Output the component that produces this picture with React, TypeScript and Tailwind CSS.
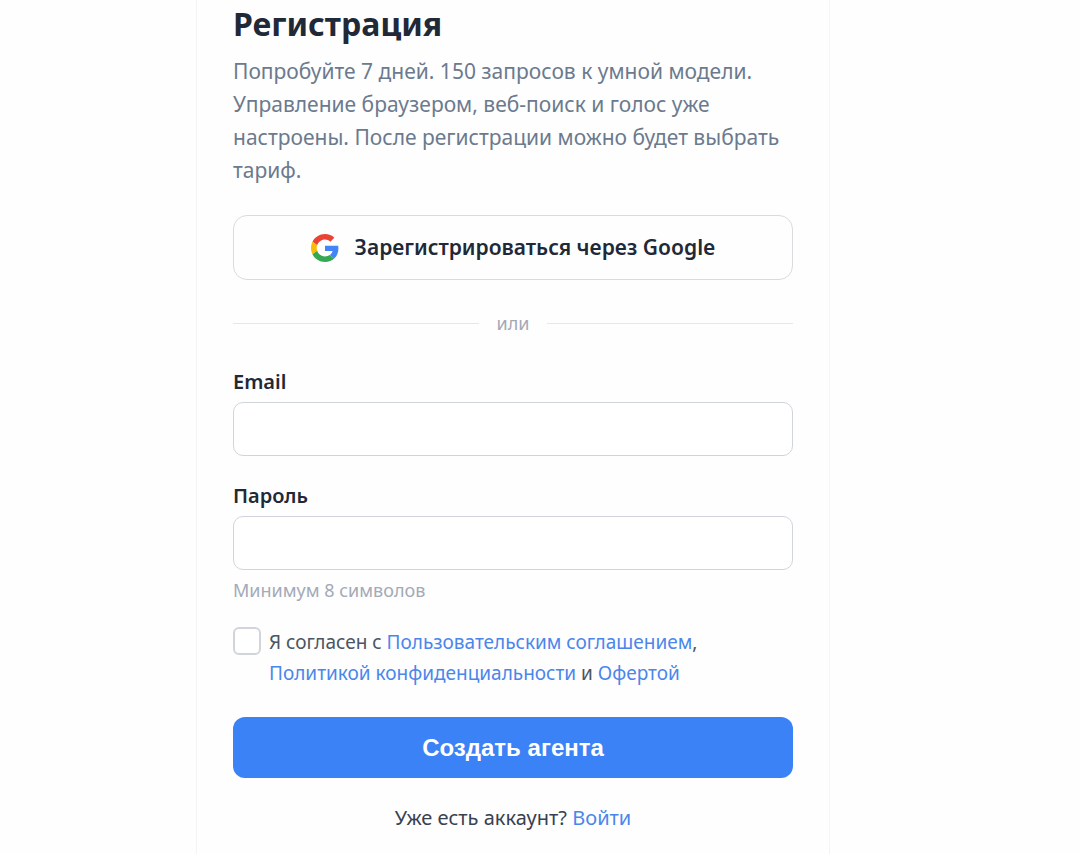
import { useState } from "react";
import type { InputHTMLAttributes } from "react";

function GoogleIcon() {
  return (
    <svg viewBox="0 0 48 48" className="h-7 w-7 shrink-0" aria-hidden="true">
      <path fill="#EA4335" d="M24 9.5c3.54 0 6.71 1.22 9.21 3.6l6.85-6.85C35.9 2.38 30.47 0 24 0 14.62 0 6.51 5.38 2.56 13.22l7.98 6.19C12.43 13.72 17.74 9.5 24 9.5z" />
      <path fill="#4285F4" d="M46.98 24.55c0-1.57-.15-3.09-.38-4.55H24v9.02h12.94c-.58 2.96-2.26 5.48-4.78 7.18l7.73 6c4.51-4.18 7.09-10.36 7.09-17.65z" />
      <path fill="#FBBC05" d="M10.53 28.59c-.48-1.45-.76-2.99-.76-4.59s.27-3.14.76-4.59l-7.98-6.19C.92 16.46 0 20.12 0 24c0 3.88.92 7.54 2.56 10.78l7.97-6.19z" />
      <path fill="#34A853" d="M24 48c6.48 0 11.93-2.13 15.89-5.81l-7.73-6c-2.15 1.45-4.92 2.3-8.16 2.3-6.26 0-11.57-4.22-13.47-9.91l-7.98 6.19C6.51 42.62 14.62 48 24 48z" />
    </svg>
  );
}

type FieldProps = InputHTMLAttributes<HTMLInputElement> & {
  id: string;
  label: string;
};

function Field({ id, label, ...props }: FieldProps) {
  return (
    <div>
      <label htmlFor={id} className="block text-xl leading-8 font-semibold text-[#1f2937]">
        {label}
      </label>
      <input
        id={id}
        className="mt-1 block h-[54px] w-full rounded-[10px] border border-[#d1d5db] bg-white px-4 text-xl outline-none focus:border-[#3b82f6]"
        {...props}
      />
    </div>
  );
}

export default function App() {
  const [email, setEmail] = useState("");
  const [password, setPassword] = useState("");
  const [agreed, setAgreed] = useState(false);

  return (
    <div className="flex min-h-screen justify-center bg-[#fefefe] pr-[54px] font-['Noto_Sans',sans-serif]">
      <main className="w-full max-w-[634px] border-x border-[#f3f4f6] bg-[#fefefe] px-9 pt-1">
        <h1 className="text-[32px] leading-[39px] font-bold text-[#1f2937]">Регистрация</h1>
        <p className="mt-3 text-[21px] leading-[33px] text-[#6b7a8d]">
          Попробуйте 7 дней. 150 запросов к умной модели. Управление браузером, веб-поиск и голос уже
          настроены. После регистрации можно будет выбрать тариф.
        </p>

        <button
          type="button"
          className="mt-7 flex h-[65px] w-full items-center justify-center gap-4 rounded-[14px] border border-[#d9dbdf] text-[21px] font-semibold text-[#1f2937] hover:bg-gray-50"
        >
          <GoogleIcon />
          Зарегистрироваться через Google
        </button>

        <div className="mt-8 flex items-center gap-[18px] text-lg leading-[22px] text-[#a3a9b4]">
          <div className="h-px flex-1 bg-[#e5e7eb]" />
          или
          <div className="h-px flex-1 bg-[#e5e7eb]" />
        </div>

        <form className="mt-8" onSubmit={(e) => e.preventDefault()}>
          <Field id="email" label="Email" type="email" value={email} onChange={(e) => setEmail(e.target.value)} />
          <div className="mt-6">
            <Field
              id="password"
              label="Пароль"
              type="password"
              aria-describedby="password-hint"
              value={password}
              onChange={(e) => setPassword(e.target.value)}
            />
            <p id="password-hint" className="mt-2 text-lg leading-6 text-[#a3aab8]">
              Минимум 8 символов
            </p>
          </div>

          <div className="mt-[25px] flex items-start gap-2 text-[19px] leading-[31px] text-[#4b5563]">
            <input
              id="agree"
              type="checkbox"
              className="h-7 w-7 shrink-0 appearance-none rounded-md border-2 border-[#d1d5db] bg-white checked:border-[#3b82f6] checked:bg-[#3b82f6]"
              checked={agreed}
              onChange={(e) => setAgreed(e.target.checked)}
            />
            <label htmlFor="agree">
              Я согласен с <a href="#terms" className="text-[#4a86ec]">Пользовательским соглашением</a>,{" "}
              <a href="#privacy" className="text-[#4a86ec]">Политикой конфиденциальности</a> и{" "}
              <a href="#offer" className="text-[#4a86ec]">Офертой</a>
            </label>
          </div>

          <button
            type="submit"
            className="mt-7 h-[61px] w-full rounded-[12px] bg-[#3b82f6] font-['Liberation_Sans',sans-serif] text-2xl font-bold text-white hover:bg-[#2563eb]"
          >
            Создать агента
          </button>
        </form>

        <p className="mt-6 text-center text-xl leading-8 text-[#374151]">
          Уже есть аккаунт? <a href="#login" className="text-[#4a86ec]">Войти</a>
        </p>
      </main>
    </div>
  );
}
